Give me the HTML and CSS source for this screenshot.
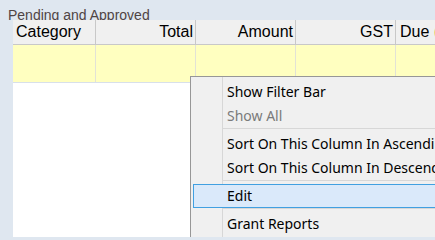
FILE: index.html
```html
<!DOCTYPE html>
<html>
<head>
<meta charset="utf-8">
<link rel="stylesheet" href="styles.css">
</head>
<body>
<div class="title">Pending and Approved</div>
<div class="grid">
  <div class="row head">
    <div class="cell c1">Category</div>
    <div class="cell num">Total</div>
    <div class="cell num">Amount</div>
    <div class="cell num">GST</div>
    <div class="cell due">Due <span class="mark">(</span></div>
  </div>
  <div class="row data">
    <div class="cell c1"></div>
    <div class="cell"></div>
    <div class="cell"></div>
    <div class="cell"></div>
    <div class="cell"></div>
  </div>
</div>
<div class="menu">
  <div class="item">Show Filter Bar</div>
  <div class="item disabled">Show All</div>
  <div class="sep"></div>
  <div class="item">Sort On This Column In Ascending Order</div>
  <div class="item">Sort On This Column In Descending Order</div>
  <div class="sep"></div>
  <div class="item active">Edit</div>
  <div class="sep"></div>
  <div class="item">Grant Reports</div>
</div>
</body>
</html>
```
FILE: styles.css
```css
html, body {
  margin: 0;
  padding: 0;
}
body {
  width: 435px;
  height: 237px;
  overflow: hidden;
  background: #dfe7f0;
  font-family: "Liberation Sans", Arial, sans-serif;
  position: relative;
}
.title {
  height: 13px;
  padding: 7px 0 0 8px;
  overflow: hidden;
  font-size: 14px;
  line-height: 16px;
  color: #4f4444;
  white-space: nowrap;
}
.grid {
  margin-left: 13px;
  width: 600px;
  height: 217px;
  background: #ffffff;
}
.row {
  display: flex;
}
.cell {
  box-sizing: border-box;
  flex: 0 0 100px;
  width: 100px;
  white-space: nowrap;
  overflow: hidden;
}
.cell.c1 {
  flex-basis: 83px;
  width: 83px;
}
.head {
  height: 25px;
  background: #f0f0f0;
  border-bottom: 1px solid #c8c8c8;
  box-sizing: border-box;
  font-size: 16px;
  line-height: 24px;
  color: #000;
}
.head .cell {
  border-right: 1px solid #c8c8c8;
  padding: 0 2px 0 3px;
}
.head .num {
  text-align: right;
}
.head .due {
  padding-left: 4px;
  border-right: none;
}
.mark {
  color: #e8a040;
}
.data {
  height: 38px;
  background: #ffffc0;
  border-bottom: 1px solid #d8e0ea;
  box-sizing: border-box;
}
.data .cell {
  border-right: 1px solid #e2e2d6;
}
.menu {
  position: absolute;
  left: 190px;
  top: 76px;
  width: 300px;
  height: 155px;
  padding: 3px 2px;
  background: #f0f0f0;
  border: 1px solid #979797;
  font-family: "Noto Sans", "Open Sans", sans-serif;
  font-size: 14px;
  color: #000;
}
.menu::before {
  content: "";
  position: absolute;
  left: 31px;
  top: 0;
  bottom: 0;
  width: 1px;
  background: #d7d7d7;
}
.item {
  position: relative;
  box-sizing: border-box;
  height: 24px;
  line-height: 23px;
  padding-left: 34px;
  white-space: nowrap;
}
.item.disabled {
  color: #7a7a7a;
}
.item.active {
  background: #dae9fa;
  border: 1px solid #41a0e1;
  padding-left: 33px;
  line-height: 21px;
}
.sep {
  height: 4px;
  margin-left: 29px;
  position: relative;
}
.sep::before {
  content: "";
  display: block;
  height: 1px;
  background: #d7d7d7;
}
```
